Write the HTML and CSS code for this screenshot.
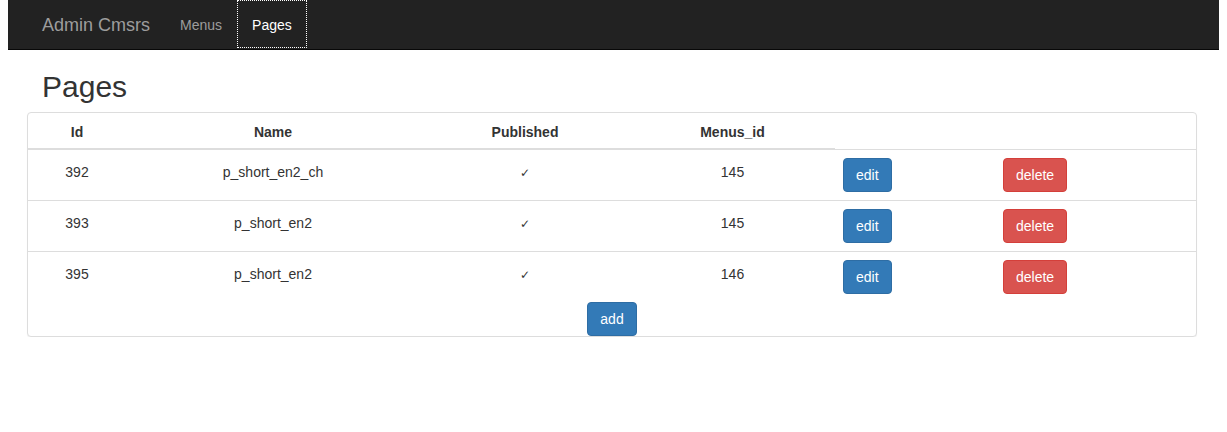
FILE: index.html
```html
<!DOCTYPE html>
<html>
<head>
<meta charset="utf-8">
<title>Admin Cmsrs</title>
<link rel="stylesheet" href="styles.css">
</head>
<body>
<nav class="navbar">
  <div class="nav-inner">
    <a class="brand" href="#">Admin Cmsrs</a>
    <a class="nav-link" href="#">Menus</a>
    <a class="nav-link active" href="#">Pages</a>
  </div>
</nav>
<main class="container">
  <h2 class="title">Pages</h2>
  <div class="panel">
    <table class="table">
      <colgroup>
        <col class="c-id"><col class="c-name"><col class="c-pub"><col class="c-menu"><col class="c-edit"><col class="c-del">
      </colgroup>
      <thead>
        <tr><th>Id</th><th>Name</th><th>Published</th><th>Menus_id</th></tr>
      </thead>
      <tbody>
        <tr>
          <td class="txt">392</td><td class="txt">p_short_en2_ch</td><td class="txt"><span class="check">✓</span></td><td class="txt">145</td>
          <td class="act"><button class="btn btn-primary">edit</button></td>
          <td class="act"><button class="btn btn-danger">delete</button></td>
        </tr>
        <tr>
          <td class="txt">393</td><td class="txt">p_short_en2</td><td class="txt"><span class="check">✓</span></td><td class="txt">145</td>
          <td class="act"><button class="btn btn-primary">edit</button></td>
          <td class="act"><button class="btn btn-danger">delete</button></td>
        </tr>
        <tr>
          <td class="txt">395</td><td class="txt">p_short_en2</td><td class="txt"><span class="check">✓</span></td><td class="txt">146</td>
          <td class="act"><button class="btn btn-primary">edit</button></td>
          <td class="act"><button class="btn btn-danger">delete</button></td>
        </tr>
      </tbody>
    </table>
    <div class="add-row"><button class="btn btn-primary">add</button></div>
  </div>
</main>
</body>
</html>
```
FILE: styles.css
```css
* { box-sizing: border-box; }
html, body { background: #fff; }
body {
  margin: 0 8px;
  font-family: "Liberation Sans", Arial, sans-serif;
  font-size: 14px;
  line-height: 20px;
  color: #333;
}
.navbar {
  background: #222;
  border-bottom: 1px solid #080808;
  height: 50px;
}
.nav-inner {
  display: flex;
  align-items: stretch;
  margin-left: 19px;
  height: 49px;
}
.brand {
  display: block;
  padding: 15px 15px;
  font-size: 18px;
  line-height: 20px;
  color: #9d9d9d;
  text-decoration: none;
}
.nav-link {
  display: block;
  padding: 15px 15px;
  color: #9d9d9d;
  text-decoration: none;
}
.nav-link.active {
  color: #fff;
  outline: 1px dotted #fff;
  outline-offset: -1px;
  height: 48px;
}
.container {
  width: 1170px;
  margin-left: 19px;
}
.title {
  margin: 20px 0 9px;
  padding-left: 15px;
  font-size: 30px;
  font-weight: 500;
  line-height: 33px;
  color: #333;
}
.panel {
  border: 1px solid #ddd;
  border-radius: 4px;
  box-shadow: 0 1px 1px rgba(0,0,0,0.05);
  background: #fff;
}
.table {
  width: 100%;
  border-collapse: collapse;
  border-spacing: 0;
}
.c-id { width: 98px; }
.c-name { width: 294px; }
.c-pub { width: 210px; }
.c-menu { width: 205px; }
.c-edit { width: 160px; }
.c-del { width: 201px; }
.table th {
  padding: 9px 8px 6px;
  text-align: center;
  font-weight: bold;
  border-bottom: 2px solid #ddd;
  vertical-align: bottom;
}
.table td {
  border-top: 1px solid #ddd;
  vertical-align: top;
  text-align: center;
}
.table td.txt { padding: 12px 8px 7px; }
.table td.act { padding: 8px; text-align: left; }
.check {
  font-family: "DejaVu Sans", sans-serif;
  font-size: 12px;
}
.btn {
  display: inline-block;
  padding: 6px 12px;
  font-family: "Liberation Sans", Arial, sans-serif;
  font-size: 14px;
  line-height: 20px;
  border: 1px solid transparent;
  border-radius: 4px;
  color: #fff;
  cursor: pointer;
  margin: 0;
}
.btn-primary { background: #337ab7; border-color: #2e6da4; }
.btn-danger { background: #d9534f; border-color: #d43f3a; }
.add-row {
  display: flex;
  justify-content: center;
}
```
